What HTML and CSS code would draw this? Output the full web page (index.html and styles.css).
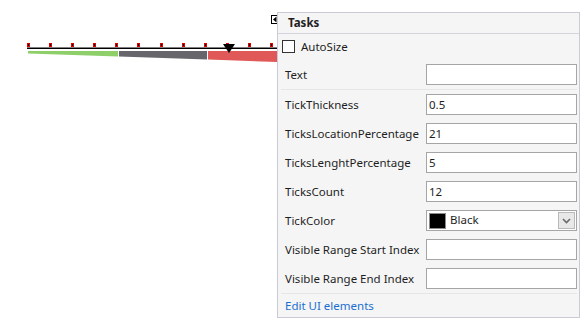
FILE: index.html
```html
<!DOCTYPE html>
<html lang="en">
<head>
    <meta charset="UTF-8">
    <title>Linear Gauge Tasks</title>
    <link rel="stylesheet" href="styles.css">
</head>
<body>
    <div class="surface">
        <!-- gauge drawn on the designer surface -->
        <svg class="gauge" width="300" height="70" viewBox="0 0 300 70">
            <polygon points="28,51 118,51 118,56.6 28,53.5" fill="#8ecf6a"/>
            <polygon points="119,51 207,51 207,59.6 119,56.6" fill="#67676b"/>
            <polygon points="208,51 300,51 300,62.8 208,59.6" fill="#e05858"/>
            <rect x="27" y="47.5" width="273" height="1.5" fill="#000"/>
            <g class="ticks">
                <rect x="27" y="43" width="3" height="4" fill="#e00000"/>
                <rect x="49" y="43" width="3" height="4" fill="#e00000"/>
                <rect x="71" y="43" width="3" height="4" fill="#e00000"/>
                <rect x="93" y="43" width="3" height="4" fill="#e00000"/>
                <rect x="115" y="43" width="3" height="4" fill="#e00000"/>
                <rect x="137" y="43" width="3" height="4" fill="#e00000"/>
                <rect x="160" y="43" width="3" height="4" fill="#e00000"/>
                <rect x="182" y="43" width="3" height="4" fill="#e00000"/>
                <rect x="204" y="43" width="3" height="4" fill="#e00000"/>
                <rect x="226" y="43" width="3" height="4" fill="#e00000"/>
                <rect x="248" y="43" width="3" height="4" fill="#e00000"/>
                <rect x="270" y="43" width="3" height="4" fill="#e00000"/>
            </g>
            <g class="tick-cores">
                <rect x="28" y="44" width="1" height="2" fill="#000"/>
                <rect x="50" y="44" width="1" height="2" fill="#000"/>
                <rect x="72" y="44" width="1" height="2" fill="#000"/>
                <rect x="94" y="44" width="1" height="2" fill="#000"/>
                <rect x="116" y="44" width="1" height="2" fill="#000"/>
                <rect x="138" y="44" width="1" height="2" fill="#000"/>
                <rect x="161" y="44" width="1" height="2" fill="#000"/>
                <rect x="183" y="44" width="1" height="2" fill="#000"/>
                <rect x="205" y="44" width="1" height="2" fill="#000"/>
                <rect x="249" y="44" width="1" height="2" fill="#000"/>
                <rect x="271" y="44" width="1" height="2" fill="#000"/>
            </g>
            <polygon points="223,44 235,44 229,53" fill="#000"/>
        </svg>

        <svg class="smart-tag" width="8" height="9" viewBox="0 0 8 9">
            <rect x="0.5" y="0.5" width="7" height="8" fill="#fff" stroke="#000"/>
            <polygon points="2,4.5 5.5,1.5 5.5,7.5" fill="#000"/>
        </svg>

        <div class="tasks">
            <div class="tasks-title">Tasks</div>
            <div class="tasks-body">
                <label class="check-row">
                    <span class="checkbox"></span>
                    <span>AutoSize</span>
                </label>
                <div class="prop-row">
                    <span class="prop-label">Text</span>
                    <span class="prop-input"></span>
                </div>
                <div class="divider"></div>
                <div class="prop-row">
                    <span class="prop-label">TickThickness</span>
                    <span class="prop-input">0.5</span>
                </div>
                <div class="prop-row">
                    <span class="prop-label">TicksLocationPercentage</span>
                    <span class="prop-input">21</span>
                </div>
                <div class="prop-row">
                    <span class="prop-label">TicksLenghtPercentage</span>
                    <span class="prop-input">5</span>
                </div>
                <div class="prop-row">
                    <span class="prop-label">TicksCount</span>
                    <span class="prop-input">12</span>
                </div>
                <div class="prop-row">
                    <span class="prop-label">TickColor</span>
                    <span class="prop-input combo">
                        <span class="swatch"></span>
                        <span class="combo-text">Black</span>
                        <span class="combo-button">
                            <svg width="9" height="6" viewBox="0 0 9 6">
                                <polyline points="1,1 4.5,4.5 8,1" fill="none" stroke="#6a6a6a" stroke-width="1.6"/>
                            </svg>
                        </span>
                    </span>
                </div>
                <div class="prop-row">
                    <span class="prop-label">Visible Range Start Index</span>
                    <span class="prop-input"></span>
                </div>
                <div class="prop-row">
                    <span class="prop-label">Visible Range End Index</span>
                    <span class="prop-input"></span>
                </div>
                <div class="divider"></div>
                <div class="link-row">
                    <a class="edit-link">Edit UI elements</a>
                </div>
            </div>
        </div>
    </div>
</body>
</html>
```

FILE: styles.css
```css
body {
    margin: 0;
    background: #fff;
    font-family: 'Segoe UI', 'Noto Sans', sans-serif;
    font-size: 11.5px;
    color: #1e1e1e;
}
.surface {
    position: relative;
    width: 583px;
    height: 324px;
    overflow: hidden;
}
.gauge {
    position: absolute;
    left: 0;
    top: 0;
}
/* designer glyph, half hidden under the panel */
.smart-tag {
    position: absolute;
    left: 271px;
    top: 15px;
}
.tasks {
    position: absolute;
    left: 277px;
    top: 12px;
    width: 301px;
    height: 304px;
    background: #f5f5f5;
    border: 1px solid #cacad6;
    display: flex;
    flex-direction: column;
}
.tasks-title {
    height: 20px;
    line-height: 20px;
    padding-left: 10px;
    font-weight: bold;
    border-bottom: 1px solid #d4d4de;
}
.tasks-body {
    display: flex;
    flex-direction: column;
}
.check-row {
    display: flex;
    align-items: center;
    gap: 6px;
    height: 25px;
    padding-left: 4px;
    padding-bottom: 1px;
}
.checkbox {
    width: 11px;
    height: 11px;
    border: 1px solid #333;
    background: #fff;
}
.prop-row {
    display: flex;
    align-items: center;
    height: 29px;
    padding-left: 7px;
}
.prop-label {
    width: 141px;
    white-space: nowrap;
}
.prop-input {
    box-sizing: border-box;
    width: 151px;
    height: 21px;
    border: 1px solid #a5a5a5;
    background: #fff;
    padding-left: 2px;
    line-height: 19px;
    display: flex;
    align-items: center;
}
.divider {
    height: 1px;
    margin: 0 2px 0 3px;
    background: #e6e6e6;
}
.combo {
    padding-left: 2px;
    gap: 4px;
}
.swatch {
    box-sizing: border-box;
    width: 17px;
    height: 16px;
    background: #000;
    border: 1px solid #8a8a8a;
}
.combo-text {
    flex: 1;
    margin-top: -3px;
}
.combo-button {
    box-sizing: border-box;
    width: 17px;
    height: 17px;
    margin-right: 1px;
    background: #e8e8e8;
    border: 1px solid #b9b9b9;
    display: flex;
    align-items: center;
    justify-content: center;
}
.link-row {
    height: 23px;
    display: flex;
    align-items: center;
    padding-left: 7px;
}
.edit-link {
    color: #1a6fd0;
}
```
